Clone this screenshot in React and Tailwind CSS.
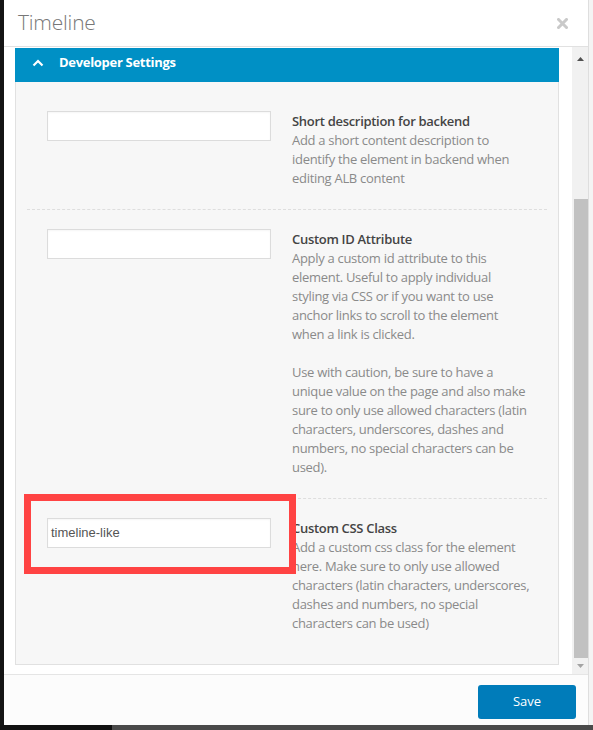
import React from "react";

function Row({ label, children, value, last, highlight, wide }) {
  return (
    <div
      className={
        "relative flex items-start pl-[20px] pt-[19px] pb-[21px] " +
        (last ? "" : "border-b border-dashed border-[#dedede]")
      }
    >
      {highlight && (
        <div className="absolute left-[-3px] top-[-5px] w-[272px] h-[80px] border-[7px] border-[#ff4343]" />
      )}
      <div className="w-[224px] h-[30px] shrink-0 bg-white border border-[#dcdcdc] shadow-[inset_0_1px_2px_rgba(0,0,0,0.04)] flex items-center px-[3px]">
        <span className="text-[13px] text-[#555] font-['Liberation_Sans',Arial,sans-serif]">{value}</span>
      </div>
      <div
        className={
          "ml-[21px] mt-[1px] text-[13px] leading-[19px] tracking-[-0.3px] " +
          (wide ? "w-[241px]" : "w-[237px]")
        }
      >
        <div className="font-semibold text-[#444]">{label}</div>
        <div className="text-[#8a8a8a]">{children}</div>
      </div>
    </div>
  );
}

export default function App() {
  return (
    <div className="w-[593px] h-[730px] flex flex-col bg-[#151515] font-['Open_Sans',sans-serif] overflow-hidden">
      <div className="flex flex-1 min-h-0">
        <div className="w-[4px] bg-[#141414]" />
        <div className="flex-1 flex flex-col bg-white border-r border-[#dedede]">
          {/* header */}
          <div className="h-[47px] shrink-0 border-b border-[#e1e1e1] flex items-center justify-between pl-[14px] pr-[20px]">
            <span className="text-[21px] font-light text-[#777] tracking-[-0.2px]">Timeline</span>
            <svg width="11" height="11" viewBox="0 0 11 11" className="mt-[1px]">
              <path d="M1.5 1.5 L9.5 9.5 M9.5 1.5 L1.5 9.5" stroke="#c9c9c9" strokeWidth="3" strokeLinecap="square" />
            </svg>
          </div>
          {/* body */}
          <div className="flex-1 min-h-0 flex">
            <div className="flex-1 pl-[11px] pr-[13px] pt-[1px] overflow-hidden">
              <div className="h-[34px] bg-[#0090c5] flex items-center pl-[17px] pb-[5px]">
                <svg width="12" height="8" viewBox="0 0 12 8">
                  <path d="M1.5 6.5 L6 2 L10.5 6.5" stroke="#fff" strokeWidth="2.2" fill="none" />
                </svg>
                <span className="ml-[15px] text-[13px] font-bold text-white tracking-[-0.3px]">Developer Settings</span>
              </div>
              <div className="bg-[#f7f7f7] border border-t-0 border-[#e1e1e1] px-[11px] py-[10px]">
                <Row label="Short description for backend">
                  Add a short content description to identify the element in backend when editing ALB content
                </Row>
                <Row label="Custom ID Attribute">
                  <p>
                    Apply a custom id attribute to this element. Useful to apply individual styling via CSS or if you want to use anchor links to scroll to the element when a link is clicked.
                  </p>
                  <p className="mt-[19px]">
                    Use with caution, be sure to have a unique value on the page and also make sure to only use allowed characters (latin characters, underscores, dashes and numbers, no special characters can be used).
                  </p>
                </Row>
                <Row label="Custom CSS Class" value="timeline-like" last highlight wide>
                  Add a custom css class for the element here. Make sure to only use allowed characters (latin characters, underscores, dashes and numbers, no special characters can be used)
                </Row>
              </div>
            </div>
            {/* scrollbar */}
            <div className="w-[16px] bg-[#f1f1f1] flex flex-col items-stretch">
              <div className="h-[17px] flex items-end justify-center pb-[3px]">
                <svg width="7" height="4" viewBox="0 0 7 4"><path d="M0 4 L3.5 0 L7 4 Z" fill="#505050" /></svg>
              </div>
              <div className="h-[135px]" />
              <div className="flex-1 ml-[2px] bg-[#c1c1c1]" />
              <div className="h-[16px] flex items-center justify-center">
                <svg width="7" height="4" viewBox="0 0 7 4"><path d="M0 0 L7 0 L3.5 4 Z" fill="#a3a3a3" /></svg>
              </div>
            </div>
          </div>
          {/* footer */}
          <div className="h-[51px] shrink-0 border-t border-[#e5e5e5] bg-[#fcfcfc] flex justify-end items-start pt-[10px] pr-[12px]">
            <button className="w-[98px] h-[34px] rounded-[3px] bg-[#007cba] text-white text-[13px]">Save</button>
          </div>
        </div>
        <div className="w-[4px] bg-[#f4f4f4]" />
      </div>
      <div className="h-[5px] shrink-0 flex">
        <div className="w-[112px] bg-[#111]" />
        <div className="flex-1 bg-[#4a4a4a]" />
      </div>
    </div>
  );
}
